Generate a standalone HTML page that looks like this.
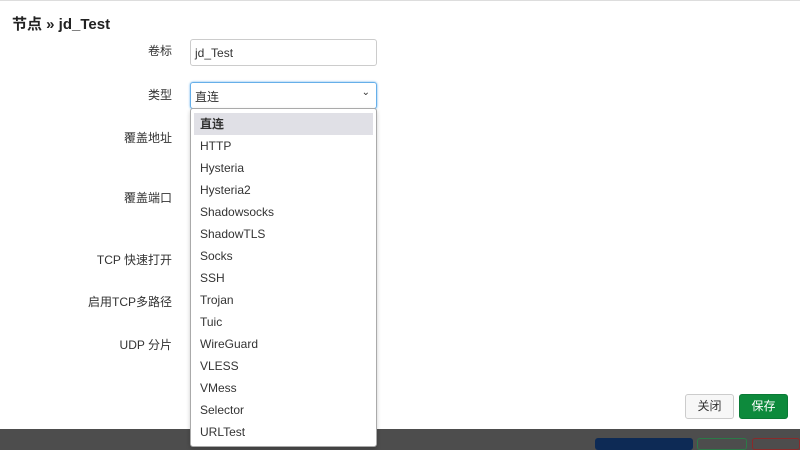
<!DOCTYPE html>
<html><head><style>
*{box-sizing:border-box;margin:0;padding:0}
body{width:800px;height:447px;overflow:hidden;background:#4d4d4d;font-family:"Liberation Sans","Noto Sans CJK SC",sans-serif;font-size:12px;color:#333;position:relative}
.modal{position:absolute;left:0;top:0;width:800px;height:429px;background:#fff;border-top:1px solid #ddd}
h3{position:absolute;left:12px;top:12px;font-size:15px;font-weight:bold;color:#222}
.lbl{position:absolute;right:628px;font-size:12px;color:#333;text-align:right;white-space:nowrap}
.inp{position:absolute;left:190px;width:187px;height:27px;border:1px solid #ccc;border-radius:3px;padding:6px 4px;font-size:12px}
.sel{border-color:#66afe9;box-shadow:0 0 2px #66afe9;padding-top:5px}
.dd{position:absolute;left:190px;top:108px;width:187px;height:345px;background:#fff;border:1px solid #aaa;border-radius:3px;box-shadow:0 2px 4px rgba(0,0,0,.2)}
.dd div{height:22px;line-height:22px;padding-left:6px;margin:0 3px;font-size:12px;color:#333}
.dd .on{background:#e0e0e6;margin-top:4px;font-weight:bold}
.btn{position:absolute;top:393px;height:25px;border-radius:3px;font-size:12px;text-align:center;line-height:23px}
</style></head><body>
<div class="modal">
<h3>节点 » jd_Test</h3>
<div class="lbl" style="top:41px">卷标</div>
<div class="inp" style="top:38px">jd_Test</div>
<div class="lbl" style="top:85px">类型</div>
<div class="inp sel" style="top:81px">直连<span style="position:absolute;right:6px;top:4px;font-size:10px">&#8964;</span></div>
<div class="lbl" style="top:128px">覆盖地址</div>
<div class="lbl" style="top:188px">覆盖端口</div>
<div class="lbl" style="top:250px">TCP 快速打开</div>
<div class="lbl" style="top:292px">启用TCP多路径</div>
<div class="lbl" style="top:335px">UDP 分片</div>
<div class="btn" style="left:685px;width:49px;border:1px solid #ccc;background:#f7f7f7;color:#333">关闭</div>
<div class="btn" style="left:739px;width:49px;border:1px solid #0a7a36;background:#0d8a3c;color:#fff">保存</div>
</div>
<div style="position:absolute;left:595px;top:438px;width:98px;height:12px;background:#0d2a55;border-radius:3px"></div>
<div style="position:absolute;left:697px;top:438px;width:50px;height:12px;border:1px solid #2b7a48;border-radius:3px"></div>
<div style="position:absolute;left:752px;top:438px;width:48px;height:12px;border:1px solid #8a2a2a;border-radius:3px"></div>
<div class="dd" style="height:339px">
<div class="on">直连</div><div>HTTP</div><div>Hysteria</div><div>Hysteria2</div><div>Shadowsocks</div><div>ShadowTLS</div><div>Socks</div><div>SSH</div><div>Trojan</div><div>Tuic</div><div>WireGuard</div><div>VLESS</div><div>VMess</div><div>Selector</div><div>URLTest</div>
</div>
</body></html>
